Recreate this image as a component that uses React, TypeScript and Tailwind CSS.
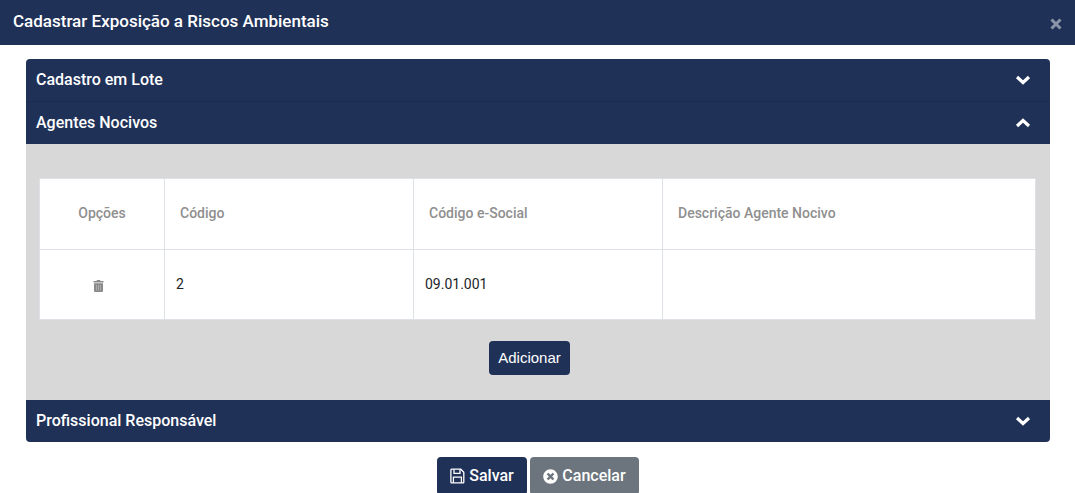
import { FaTimesCircle } from "react-icons/fa";

function Chevron({ up }: { up?: boolean }) {
  return (
    <svg width="16" height="10" viewBox="0 0 16 10" className="text-white">
      <polyline
        points={up ? "2,8 8,2.5 14,8" : "2,2 8,7.5 14,2"}
        fill="none"
        stroke="currentColor"
        strokeWidth="3.2"
      />
    </svg>
  );
}

function AccordionHeader({ title, open }: { title: string; open?: boolean }) {
  return (
    <div className="flex h-[42px] items-center justify-between pl-[10px] pr-[19px] text-[16px] font-medium text-white">
      <span>{title}</span>
      <Chevron up={open} />
    </div>
  );
}

function CloseIcon() {
  return (
    <svg width="12" height="12" viewBox="0 0 12 12" className="mt-[4px] text-[#8b95a8]">
      <path d="M1.5 1.5 L10.5 10.5 M10.5 1.5 L1.5 10.5" fill="none" stroke="currentColor" strokeWidth="3" />
    </svg>
  );
}

function TrashIcon() {
  return (
    <svg width="11" height="12" viewBox="0 0 11 12" className="mr-[7px]">
      <path d="M4 0 H7 L7.6 1 H10.5 V2.6 H0.5 V1 H3.4 Z" fill="#8a8a8a" />
      <path d="M1 3.2 H10 V11 Q10 12 9 12 H2 Q1 12 1 11 Z" fill="#8a8a8a" />
      <path d="M3.5 5 V10.5 M5.5 5 V10.5 M7.5 5 V10.5" stroke="#b4b4b4" strokeWidth="0.8" />
    </svg>
  );
}

function SaveIcon() {
  return (
    <svg width="15" height="16" viewBox="0 0 15 16" fill="none" stroke="currentColor" strokeWidth="1.3">
      <path d="M1.6 1.2 H10.8 L13.8 4.2 V14.2 Q13.8 14.9 13.1 14.9 H1.6 Q0.9 14.9 0.9 14.2 V1.9 Q0.9 1.2 1.6 1.2 Z" />
      <path d="M4 1.2 V5.4 H10 V1.2" />
      <path d="M3.4 14.9 V9.2 H11.4 V14.9" />
    </svg>
  );
}

export default function App() {
  return (
    <div className="h-[493px] overflow-hidden bg-white font-['Roboto',sans-serif]">
      {/* Modal header */}
      <div className="flex h-[45px] items-center justify-between bg-[#1f3157] pb-[2px] pl-[13px] pr-[13px]">
        <h1 className="text-[17px] font-medium text-white">Cadastrar Exposição a Riscos Ambientais</h1>
        <CloseIcon />
      </div>

      <div className="px-[25px] pt-[14px]">
        {/* Accordion */}
        <div className="ml-px overflow-hidden rounded-[4px] bg-[#1f3157]">
          <AccordionHeader title="Cadastro em Lote" />
          <div className="h-px bg-[#1c2c4f]" />
          <AccordionHeader title="Agentes Nocivos" open />

          <div className="h-[256px] bg-[#d8d8d8] px-[13px] pt-[34px]">
            <table className="w-[997px] table-fixed border-collapse bg-white text-[14px]">
              <thead>
                <tr className="h-[71px] text-left text-[#8f8f8f]">
                  <th className="w-[125px] border border-[#dee2e6] pb-[2px] text-center font-medium">Opções</th>
                  <th className="w-[249px] border border-[#dee2e6] px-[15px] pb-[2px] font-medium">Código</th>
                  <th className="w-[249px] border border-[#dee2e6] px-[15px] pb-[2px] font-medium">Código e-Social</th>
                  <th className="border border-[#dee2e6] px-[15px] pb-[2px] font-medium">Descrição Agente Nocivo</th>
                </tr>
              </thead>
              <tbody>
                <tr className="h-[70px] text-[#212529]">
                  <td className="border border-[#dee2e6]">
                    <div className="flex justify-center pt-[2px]">
                      <TrashIcon />
                    </div>
                  </td>
                  <td className="border border-[#dee2e6] px-[11px]">2</td>
                  <td className="border border-[#dee2e6] px-[11px]">09.01.001</td>
                  <td className="border border-[#dee2e6] px-[11px]"></td>
                </tr>
              </tbody>
            </table>

            <div className="mt-[21px] flex justify-center pr-[17px]">
              <button className="h-[34px] w-[81px] rounded-[4px] bg-[#1f3157] font-['Liberation_Sans',sans-serif] text-[15px] text-white">
                Adicionar
              </button>
            </div>
          </div>

          <AccordionHeader title="Profissional Responsável" />
        </div>

        {/* Footer buttons */}
        <div className="mt-[15px] flex justify-center gap-[3px] pl-[1px]">
          <button className="flex h-[38px] w-[90px] items-center justify-center gap-[4px] rounded-[4px] bg-[#1f3157] text-[16px] font-medium text-white">
            <SaveIcon />
            Salvar
          </button>
          <button className="flex h-[38px] w-[109px] items-center justify-center gap-[4px] rounded-[4px] bg-[#6c757d] text-[16px] font-medium text-white">
            <FaTimesCircle className="text-[15px]" />
            Cancelar
          </button>
        </div>
      </div>
    </div>
  );
}
